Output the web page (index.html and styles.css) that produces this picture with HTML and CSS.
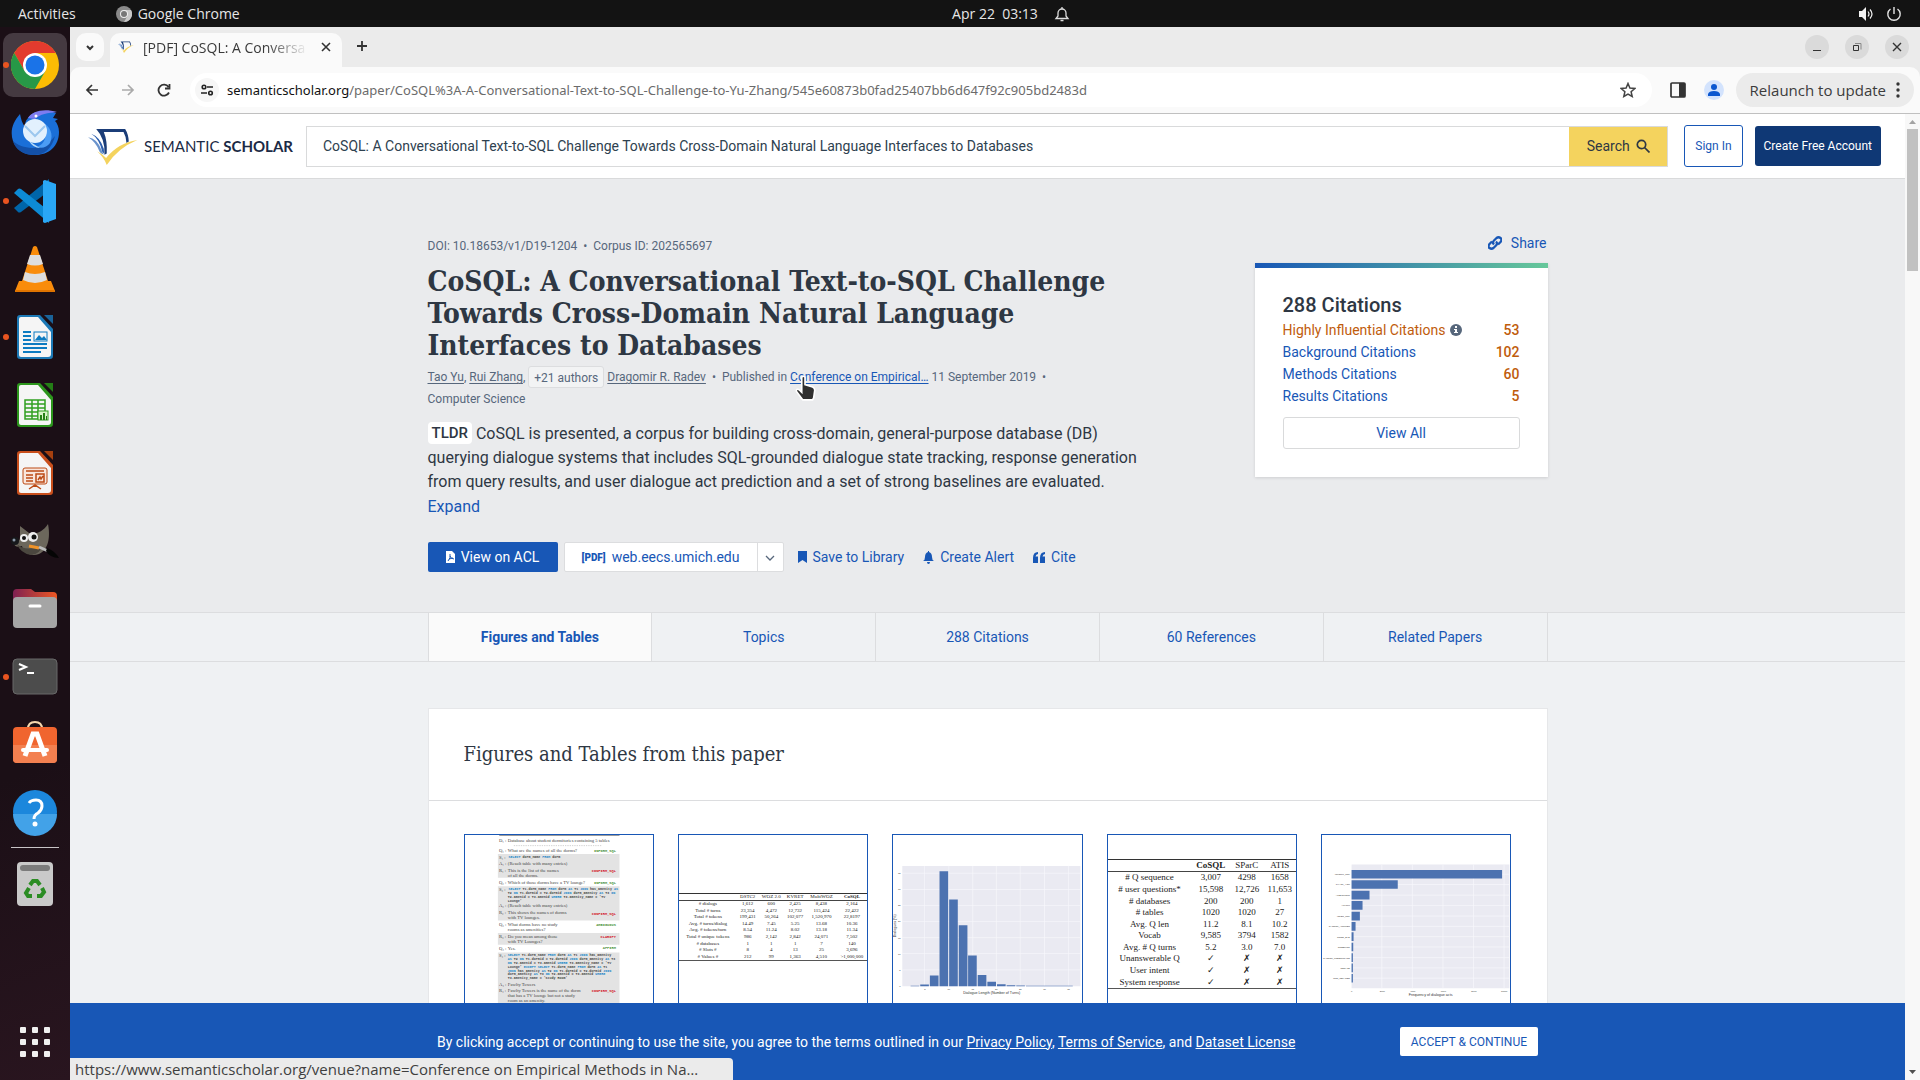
FILE: index.html
```
<!DOCTYPE html>
<html lang="en">
<head>
    <meta charset="UTF-8">
    <meta name="viewport" content="width=device-width, initial-scale=1.0">
    <title>[PDF] CoSQL: A Conversational Text-to-SQL Challenge</title>
    <link rel="stylesheet" href="styles.css">
</head>
<body>
    <div class="topbar">
        <div class="topbar-left">
            <span>Activities</span>
            <span class="topbar-app">
                <svg width="16" height="16" viewBox="0 0 16 16"><circle cx="8" cy="8" r="8" fill="#8a8a8a"/><path d="M8 4h7a8 8 0 0 1-7 12l3.500-6z" fill="#c8c8c8"/><circle cx="8" cy="8" r="4" fill="#eee"/><circle cx="8" cy="8" r="3" fill="#777"/></svg>
                Google Chrome
            </span>
        </div>
        <div class="topbar-clock">
            <span>Apr 22&nbsp; 03:13</span>
            <svg width="16" height="16" viewBox="0 0 16 16" fill="none" stroke="#ddd" stroke-width="1.300"><path d="M2 12.500h12l-2-2.500V7a4 4 0 0 0-8 0v3z"/><path d="M6.500 14.500h3M8 1v2"/></svg>
        </div>
        <div class="topbar-right">
            <svg width="16" height="16" viewBox="0 0 16 16"><path d="M1 5h3l4-4v14l-4-4H1z" fill="#f2f2f2"/><path d="M10 5.500q2 2.500 0 5M12 3.500q4 4.500 0 9" fill="none" stroke="#f2f2f2" stroke-width="1.200"/></svg>
            <svg width="16" height="16" viewBox="0 0 16 16" fill="none" stroke="#e6e6e6" stroke-width="1.400"><path d="M4.500 3A6.200 6.200 0 1 0 11.500 3M8 1v7"/></svg>
        </div>
    </div>

    <div class="desktop">
        <nav class="dock" aria-label="Dock">
            <a class="dock-item active running" href="#" aria-label="Chrome">
                <svg viewBox="0 0 48 48"><circle cx="24" cy="24" r="24" fill="#fbbc04"/><path d="M3.200 12A24 24 0 0 1 44.800 12H24L13.600 30z" fill="#e33b2e"/><path d="M3.200 12A24 24 0 0 0 24 48L34.400 30 24 36 13.600 30z" fill="#279847"/><circle cx="24" cy="24" r="12" fill="#fff"/><circle cx="24" cy="24" r="9.500" fill="#1a73e8"/></svg>
            </a>
            <a class="dock-item" href="#" aria-label="Thunderbird">
                <svg viewBox="0 0 48 48"><path d="M9 5C1 14-1 23 2 32c4 10 12 14 22 14 14 0 24-9 24-23 0-5-2-9-4-11l3-2-5-1 3-5c-10-4-24-2-28 5-3 3-3 6-3 9-3-4-4-8-5-13z" fill="#1a6fd8"/><path d="M17 9C21 2 33-1 46 3c-9 1-17 2-22 7z" fill="#7d7cf0"/><path d="M2 32c9 8 29 12 42-5-3 12-10 19-21 19S4 40 2 32z" fill="#1350a8"/><path d="M31 13c8 4 12 12 8 21-3 4-8 6-13 4 8-3 12-12 5-25z" fill="#4b9cf5"/><circle cx="24" cy="22" r="12" fill="#e2f0fd"/><path d="M14 17l10 10 10-10" fill="none" stroke="#9cc7ee" stroke-width="2"/><path d="M18 32q6 4 11 7-7 0-11-7z" fill="#b3d9fa"/><circle cx="25" cy="7" r="1.500" fill="#fff"/></svg>
            </a>
            <a class="dock-item running" href="#" aria-label="VS Code">
                <svg viewBox="0 0 48 48"><path d="M3 31l4 4q1 1 3 0L38 14V2z" fill="#0065a9"/><path d="M3 16l4-4q1-1 3 0L38 34v12z" fill="#0d8bd6"/><path d="M34 3l11 4v35l-11 4q-1 0-2-1V4q1-1 2-1z" fill="#2aa7f5"/></svg>
            </a>
            <a class="dock-item" href="#" aria-label="VLC">
                <svg viewBox="0 0 48 48"><path d="M8 36h32l4 10H4z" fill="#f98c0b"/><path d="M4 45h40v2H4z" fill="#e07400"/><path d="M22 2q2-2 4 0l11 34q-13 7-26 0z" fill="#f98c0b"/><path d="M19 10h10l3 9q-8 3-16 0zM14 27q10 4 20 0l2 8q-12 6-24 0z" fill="#dedede"/></svg>
            </a>
            <a class="dock-item running" href="#" aria-label="Writer">
                <svg viewBox="0 0 48 48"><path d="M9 2h20l13 14v27q0 3-3 3H9q-3 0-3-3V5q0-3 3-3z" fill="#1c79b6"/><path d="M10 4h17l13 15v22q0 3-3 3H10q-2 0-2-2V6q0-2 2-2z" fill="#f5f5f5"/><path d="M33 2h9v9z" fill="#1a6399"/><path d="M12 19h8M12 23h8M12 27h8M12 31h24M12 35h24M12 39h18" stroke="#0d7bc1" stroke-width="2"/><rect x="23" y="19" width="13" height="9" fill="none" stroke="#0d7bc1"/><path d="M24 27l4-5 3 3 2-2 3 4z" fill="#0d7bc1"/></svg>
            </a>
            <a class="dock-item" href="#" aria-label="Calc">
                <svg viewBox="0 0 48 48"><path d="M9 2h20l13 14v27q0 3-3 3H9q-3 0-3-3V5q0-3 3-3z" fill="#2c961c"/><path d="M10 4h17l13 15v22q0 3-3 3H10q-2 0-2-2V6q0-2 2-2z" fill="#f5f5f5"/><path d="M33 2h9v9z" fill="#247e16"/><path d="M14 19h20v19H14zM14 23h20M14 27h20M14 31h20M14 35h20M21 19v19M27 19v19" fill="none" stroke="#31a020" stroke-width="1.500"/><rect x="27" y="30" width="10" height="9" fill="#d7f3c8" stroke="#31a020"/><path d="M29 39v-5h2v5zM32 39v-7h2v7zM35 39v-4h1v4z" fill="#247e16"/></svg>
            </a>
            <a class="dock-item" href="#" aria-label="Impress">
                <svg viewBox="0 0 48 48"><path d="M9 2h20l13 14v27q0 3-3 3H9q-3 0-3-3V5q0-3 3-3z" fill="#c94f1c"/><path d="M10 4h17l13 15v22q0 3-3 3H10q-2 0-2-2V6q0-2 2-2z" fill="#f5f5f5"/><path d="M33 2h9v9z" fill="#a6400f"/><rect x="12" y="19" width="24" height="16" rx="2" fill="#f9e6dc" stroke="#bc4a15"/><path d="M15 22h18M15 26h7M15 29h7M15 32h7" stroke="#bc4a15" stroke-width="1.500"/><path d="M25 25h8v8h-8zM27 31l2-3 1 2 2-3M24 36v2M18 40l6-4 6 4" fill="none" stroke="#bc4a15" stroke-width="1.500"/></svg>
            </a>
            <a class="dock-item" href="#" aria-label="GIMP">
                <svg viewBox="0 0 48 48"><path d="M9 9l9 7c6 2 14-1 19-9 2 10 2 25-9 30-9 3-16-2-17-8-5 2-8 0-8-3 3-2 6-1 6-6z" fill="#6c675c"/><path d="M6 27q8 8 24 2 0 8-10 9-11-2-14-11z" fill="#4b473f"/><circle cx="4" cy="24" r="4" fill="#17181b"/><circle cx="3" cy="23" r="1.500" fill="#8b98a8"/><circle cx="13" cy="21" r="4" fill="#eee"/><circle cx="13" cy="21" r="2" fill="#111"/><circle cx="22" cy="20" r="5" fill="#eee"/><circle cx="23" cy="20" r="2.500" fill="#111"/><path d="M18 29l10 2" stroke="#ef9329" stroke-width="3"/><path d="M28 30l9 4" stroke="#bbb" stroke-width="3"/><path d="M36 31q8 3 12 10-9 0-13-7z" fill="#050505"/></svg>
            </a>
            <a class="dock-item" href="#" aria-label="Files">
                <svg viewBox="0 0 48 48"><defs><linearGradient id="folder"><stop offset="0" stop-color="#7e2152"/><stop offset="1" stop-color="#ee5824"/></linearGradient></defs><path d="M2 8q0-4 4-4h14l4 3h18q4 0 4 4v8H2z" fill="url(#folder)"/><rect x="2" y="12" width="44" height="31" rx="4" fill="#a5a5a5"/><path d="M19 21h10" stroke="#fff" stroke-width="3" stroke-linecap="round"/></svg>
            </a>
            <a class="dock-item running" href="#" aria-label="Terminal">
                <svg viewBox="0 0 48 48"><rect x="2" y="6" width="44" height="35" rx="4" fill="#4c4c4c" stroke="#686868"/><path d="M8 11l7 3-7 3M16 20h7" fill="none" stroke="#fff" stroke-width="2"/></svg>
            </a>
            <a class="dock-item" href="#" aria-label="Software">
                <svg viewBox="0 0 48 48"><path d="M17 8q0-7 7-7t7 7" fill="none" stroke="#f4d7ae" stroke-width="2"/><rect x="2" y="6" width="44" height="36" rx="4" fill="#f0652f"/><path d="M2 24h44v14q0 4-4 4H6q-4 0-4-4z" fill="#f38050"/><path d="M14 35l8-22h4l8 22" fill="none" stroke="#fff" stroke-width="5"/><path d="M12 29h24" stroke="#fff" stroke-width="4" stroke-linecap="round"/></svg>
            </a>
            <a class="dock-item" href="#" aria-label="Help">
                <svg viewBox="0 0 48 48"><circle cx="24" cy="23" r="22" fill="#1c87dc"/><path d="M2 25h44a22 22 0 0 1-44 0z" fill="#42a2e8"/><path d="M18 14q2-3 7-3 6 0 6 6 0 4-4 7-4 2-4 6" fill="none" stroke="#fff" stroke-width="3"/><circle cx="24" cy="35" r="2.500" fill="#fff"/></svg>
            </a>
            <hr class="dock-line">
            <a class="dock-item" href="#" aria-label="Trash">
                <svg viewBox="0 0 48 48"><rect x="6" y="2" width="36" height="44" rx="4" fill="#c9c9c9"/><rect x="9" y="5" width="30" height="6" rx="3" fill="#7b7b7b"/><g fill="none" stroke="#2b8c24" stroke-width="4"><path d="M19 25l3-4h4l3 4M31 28l2 4-3 4h-4M21 36h-4l-2-3 3-5"/></g></svg>
            </a>
            <a class="dock-item dock-apps" href="#" aria-label="Show applications">
                <svg viewBox="0 0 48 48" fill="#f0f0f0"><rect x="9" y="9" width="6" height="6" rx="1"/><rect x="21" y="9" width="6" height="6" rx="1"/><rect x="33" y="9" width="6" height="6" rx="1"/><rect x="9" y="21" width="6" height="6" rx="1"/><rect x="21" y="21" width="6" height="6" rx="1"/><rect x="33" y="21" width="6" height="6" rx="1"/><rect x="9" y="33" width="6" height="6" rx="1"/><rect x="21" y="33" width="6" height="6" rx="1"/><rect x="33" y="33" width="6" height="6" rx="1"/></svg>
            </a>
        </nav>

        <div class="browser">
            <div class="tabstrip">
                <button class="tab-search" aria-label="Search tabs"><svg width="10" height="10" viewBox="0 0 10 10" fill="none" stroke="#333" stroke-width="2"><path d="M2 3l3 3 3-3"/></svg></button>
                <div class="tab">
                    <svg class="favicon" width="16" height="12" viewBox="54 318 152 112"><use href="#s2-mark"/></svg>
                    <span class="tab-title">[PDF] CoSQL: A Conversa</span>
                    <button class="tab-close" aria-label="Close tab"><svg width="10" height="10" viewBox="0 0 10 10" stroke="#333" stroke-width="1.600"><path d="M1 1l8 8M9 1L1 9"/></svg></button>
                </div>
                <button class="tab-new" aria-label="New tab"><svg width="12" height="12" viewBox="0 0 12 12" stroke="#333" stroke-width="1.800"><path d="M6 1v10M1 6h10"/></svg></button>
                <div class="window-buttons">
                    <button aria-label="Minimize"><svg width="10" height="10" viewBox="0 0 10 10" stroke="#333"><path d="M1 8.500h8"/></svg></button>
                    <button aria-label="Restore"><svg width="10" height="10" viewBox="0 0 10 10" fill="none" stroke="#333"><path d="M1.500 3.500h5v5h-5z"/><path d="M3 1.500h6v6" stroke="#888"/></svg></button>
                    <button aria-label="Close"><svg width="10" height="10" viewBox="0 0 10 10" stroke="#333" stroke-width="1.400"><path d="M1 1l8 8M9 1L1 9"/></svg></button>
                </div>
            </div>

            <div class="toolbar">
                <button class="tool" aria-label="Back"><svg width="14" height="14" viewBox="0 0 14 14" fill="none" stroke="#333" stroke-width="1.700"><path d="M13 7H2M7 2L2 7l5 5"/></svg></button>
                <button class="tool" aria-label="Forward"><svg width="14" height="14" viewBox="0 0 14 14" fill="none" stroke="#aaa" stroke-width="1.700"><path d="M1 7h11M7 2l5 5-5 5"/></svg></button>
                <button class="tool" aria-label="Reload"><svg width="14" height="14" viewBox="0 0 14 14" fill="none" stroke="#333" stroke-width="1.800"><path d="M12 9.500A5.500 5.500 0 1 1 11.500 4M12.500 1v4.500H8"/></svg></button>
                <div class="omnibox">
                    <button class="site-info" aria-label="Site information"><svg width="14" height="14" viewBox="0 0 14 14" fill="none" stroke="#222" stroke-width="1.600"><circle cx="4" cy="4" r="1.800"/><path d="M7 4h6M1 10h6"/><circle cx="10.500" cy="10" r="1.800"/></svg></button>
                    <span class="url"><b>semanticscholar.org</b>/paper/CoSQL%3A-A-Conversational-Text-to-SQL-Challenge-to-Yu-Zhang/545e60873b0fad25407bb6d647f92c905bd2483d</span>
                    <button class="star" aria-label="Bookmark"><svg width="16" height="16" viewBox="0 0 16 16" fill="none" stroke="#444" stroke-width="1.500"><path d="M8 1.500l1.900 4.600 4.900.4-3.700 3.200 1.100 4.800L8 12l-4.200 2.500 1.100-4.800L1.200 6.500l4.900-.4z"/></svg></button>
                </div>
                <button class="tool side-panel" aria-label="Side panel"><svg width="16" height="16" viewBox="0 0 16 16"><rect x="1" y="1" width="14" height="14" rx="1" fill="none" stroke="#333" stroke-width="1.700"/><path d="M9 1h6v14H9z" fill="#333"/></svg></button>
                <button class="avatar" aria-label="Profile"><svg width="20" height="20" viewBox="0 0 20 20" fill="#0b57d0"><circle cx="10" cy="7" r="3"/><path d="M4 16v-2q1-3 6-3t6 3v2z"/></svg></button>
                <button class="relaunch">Relaunch to update <svg width="4" height="16" viewBox="0 0 4 16" fill="#333"><circle cx="2" cy="2" r="1.700"/><circle cx="2" cy="8" r="1.700"/><circle cx="2" cy="14" r="1.700"/></svg></button>
            </div>

            <div class="viewport">
                <div class="page">
                    <header class="site-header">
                        <a class="logo" href="#">
                            <svg width="50" height="37" viewBox="54 318 152 112">
                                <g id="s2-mark">
                                    <path d="M54 346q28 2 43 43l5 9q-11-3-13-9-12-30-35-43z" fill="#6a93cc"/>
                                    <path d="M64 335q27 10 38 46l1 15-6-7q-8-38-33-54z" fill="#2d5fae"/>
                                    <path d="M79 321h88q10 16 11 38l-7 4q-1-19-9-33h-60q11 26 9 65l-7 4q3-48-25-78z" fill="#1b3d78"/>
                                    <path d="M82 389q17 7 27 20 36-46 95-55-59 24-93 76-10-26-29-41z" fill="#f4d35e"/>
                                </g>
                            </svg>
                            <span>SEMANTIC <b>SCHOLAR</b></span>
                        </a>
                        <form class="search">
                            <input type="text" aria-label="Search papers" value="CoSQL: A Conversational Text-to-SQL Challenge Towards Cross-Domain Natural Language Interfaces to Databases">
                            <button type="button">Search <svg width="14" height="14" viewBox="0 0 14 14" fill="none" stroke="#2e3743" stroke-width="1.700"><circle cx="5.500" cy="5.500" r="4.200"/><path d="M8.500 8.500l5 5"/></svg></button>
                        </form>
                        <button class="sign-in">Sign In</button>
                        <button class="create-account">Create Free Account</button>
                    </header>

                    <section class="hero">
                        <div class="container hero-inner">
                            <div class="paper">
                                <div class="ids">DOI: 10.18653/v1/D19-1204 &nbsp;•&nbsp; Corpus ID: 202565697</div>
                                <h1>CoSQL: A Conversational Text-to-SQL Challenge<br>Towards Cross-Domain Natural Language<br>Interfaces to Databases</h1>
                                <div class="meta">
                                    <a href="#">Tao Yu</a>, <a href="#">Rui Zhang</a>, <button class="more-authors">+21 authors</button> <a href="#">Dragomir R. Radev</a>
                                    &nbsp;•&nbsp; Published in <a class="venue" href="#">Conference on Empirical…<svg class="pointer" width="22" height="26" viewBox="0 0 20 24"><path d="M7 2q2-2 3 0v7l7 2q2 1 2 3l-1 7-1 2H8l-6-8q0-3 3-1l2 2z" fill="#2f2f2f" stroke="#fff" stroke-width="1.500"/></svg></a>
                                    11 September 2019 &nbsp;•<br>Computer Science
                                </div>
                                <p class="abstract"><span class="tldr">TLDR</span> CoSQL is presented, a corpus for building cross-domain, general-purpose database (DB) querying dialogue systems that includes SQL-grounded dialogue state tracking, response generation from query results, and user dialogue act prediction and a set of strong baselines are evaluated.</p>
                                <button class="expand">Expand</button>
                                <div class="actions">
                                    <a class="view-acl" href="#"><svg width="9" height="12" viewBox="0 0 9 12"><path d="M0 0h6l3 3v9H0z" fill="#fff"/><path d="M4 3q1 4-2 7M4 5q1 3 4 3M3 8l4-1" fill="none" stroke="#1857b6"/></svg>View on ACL</a>
                                    <div class="pdf-group">
                                        <a href="#"><b>[PDF]</b>web.eecs.umich.edu</a>
                                        <button aria-label="More sources"><svg width="10" height="8" viewBox="0 0 10 8" fill="none" stroke="#57677c" stroke-width="1.300"><path d="M1 2l4 4 4-4"/></svg></button>
                                    </div>
                                    <button class="action"><svg width="9" height="12" viewBox="0 0 9 12"><path d="M0 0h9v12L4.500 9 0 12z"/></svg>Save to Library</button>
                                    <button class="action"><svg width="11" height="13" viewBox="0 0 11 13"><path d="M5 0h1v1q3 1 3 5 0 3 2 4H0q2-1 2-4 0-4 3-5zM4 11h3q0 2-1.500 2T4 11z"/></svg>Create Alert</button>
                                    <button class="action"><svg width="12" height="11" viewBox="0 0 12 11"><path d="M5 0v2Q3 2 2.500 4.500H5V11H0V6q0-6 5-6zM12 0v2q-2 0-2.500 2.500H12V11H7V6q0-6 5-6z"/></svg>Cite</button>
                                </div>
                            </div>

                            <aside class="side">
                                <button class="share"><svg width="14" height="14" viewBox="0 0 14 14" fill="none" stroke="#1857b6" stroke-width="2.300"><path d="M6 8.500q-2-2 0-4L8.500 2q2-1.500 4 0t0 4L10 8.500"/><path d="M8 5.500q2 2 0 4L5.500 12q-2 1.500-4 0t0-4L4 5.500"/></svg>Share</button>
                                <div class="citations">
                                    <h2>288 Citations</h2>
                                    <table>
                                        <tr class="influential"><th><a href="#">Highly Influential Citations</a><svg width="12" height="12" viewBox="0 0 12 12"><circle cx="6" cy="6" r="6" fill="#57677c"/><path d="M5 2h2v2H5zM4 5h3v3h1v1H4V8h1V6H4z" fill="#fff"/></svg></th><td>53</td></tr>
                                        <tr><th><a href="#">Background Citations</a></th><td>102</td></tr>
                                        <tr><th><a href="#">Methods Citations</a></th><td>60</td></tr>
                                        <tr><th><a href="#">Results Citations</a></th><td>5</td></tr>
                                    </table>
                                    <button>View All</button>
                                </div>
                            </aside>
                        </div>
                    </section>

                    <nav class="page-nav">
                        <div class="container page-nav-inner">
                            <a class="current" href="#">Figures and Tables</a>
                            <a href="#">Topics</a>
                            <a href="#">288 Citations</a>
                            <a href="#">60 References</a>
                            <a href="#">Related Papers</a>
                        </div>
                    </nav>

                    <section class="container figures">
                        <h2>Figures and Tables from this paper</h2>
                        <div class="figure-grid">
                            <a class="figure" href="#">
                                <svg viewBox="75 75 567 560">
                                    <path d="M178 76h362" stroke="#888" stroke-width="3"/>
                                    <g fill="#e3e3e3"><path d="M174 132h366v72H174zM174 229h366v103H174zM174 370h366v35H174zM174 429h366v210H174z"/></g>
                                    <path d="M222 107h266" stroke="#777" stroke-dasharray="4 3"/>
                                    <g class="fig-serif">
                                        <text x="177" y="95">D₁ :</text><text x="204" y="95">Database about student dormitories containing 5 tables</text>
                                        <text x="177" y="125">Q₁ :</text><text x="204" y="125">What are the names of all the dorms?</text>
                                        <text x="177" y="146">S₁ :</text>
                                        <text x="177" y="166">A₁ :</text><text x="204" y="166">(Result table with many entries)</text>
                                        <text x="177" y="186">R₁ :</text><text x="204" y="186">This is the list of the names</text><text x="204" y="201">of all the dorms.</text>
                                        <text x="177" y="222">Q₂ :</text><text x="204" y="222">Which of those dorms have a TV lounge?</text>
                                        <text x="177" y="243">S₂ :</text>
                                        <text x="177" y="293">A₂ :</text><text x="204" y="293">(Result table with many entries)</text>
                                        <text x="177" y="312">R₂ :</text><text x="204" y="312">This shows the names of dorms</text><text x="204" y="327">with TV lounges.</text>
                                        <text x="177" y="349">Q₃ :</text><text x="204" y="349">What dorms have no study</text><text x="204" y="364">rooms as amenities?</text>
                                        <text x="177" y="385">R₃ :</text><text x="204" y="385">Do you mean among those</text><text x="204" y="399">with TV Lounges?</text>
                                        <text x="177" y="420">Q₄ :</text><text x="204" y="420">Yes.</text>
                                        <text x="177" y="441">S₄ :</text>
                                        <text x="177" y="529">A₄ :</text><text x="204" y="529">Fawlty Towers</text>
                                        <text x="177" y="548">R₄ :</text><text x="204" y="548">Fawlty Towers is the name of the dorm</text><text x="204" y="563">that has a TV lounge but not a study</text><text x="204" y="578">room as an amenity.</text>
                                    </g>
                                    <g class="fig-mono">
                                        <text x="206" y="145"><tspan>SELECT</tspan> dorm_name <tspan>FROM</tspan> dorm</text>
                                        <text x="206" y="242"><tspan>SELECT</tspan> T1.dorm_name <tspan>FROM</tspan> dorm <tspan>AS</tspan> T1 <tspan>JOIN</tspan> has_amenity <tspan>AS</tspan></text>
                                        <text x="204" y="254">T2 <tspan>ON</tspan> T1.dormid = T2.dormid <tspan>JOIN</tspan> dorm_amenity <tspan>AS</tspan> T3 <tspan>ON</tspan></text>
                                        <text x="204" y="265">T2.amenid = T3.amenid <tspan>WHERE</tspan> T3.amenity_name = 'TV</text>
                                        <text x="204" y="277">Lounge'</text>
                                        <text x="204" y="440"><tspan>SELECT</tspan> T1.dorm_name <tspan>FROM</tspan> dorm <tspan>AS</tspan> T1 <tspan>JOIN</tspan> has_amenity</text>
                                        <text x="204" y="452"><tspan>AS</tspan> T2 <tspan>ON</tspan> T1.dormid = T2.dormid <tspan>JOIN</tspan> dorm_amenity <tspan>AS</tspan> T3</text>
                                        <text x="204" y="463"><tspan>ON</tspan> T2.amenid = T3.amenid <tspan>WHERE</tspan> T3.amenity_name = 'TV</text>
                                        <text x="204" y="475">Lounge' <tspan>EXCEPT SELECT</tspan> T1.dorm_name <tspan>FROM</tspan> dorm <tspan>AS</tspan> T1</text>
                                        <text x="204" y="486"><tspan>JOIN</tspan> has_amenity <tspan>AS</tspan> T2 <tspan>ON</tspan> T1.dormid = T2.dormid <tspan>JOIN</tspan></text>
                                        <text x="204" y="497">dorm_amenity <tspan>AS</tspan> T3 <tspan>ON</tspan> T2.amenid = T3.amenid <tspan>WHERE</tspan></text>
                                        <text x="204" y="509">T3.amenity_name = 'Study Room'</text>
                                    </g>
                                    <g class="fig-tag fig-inform"><text x="529" y="125">INFORM_SQL</text><text x="529" y="221">INFORM_SQL</text><text x="529" y="348">AMBIGUOUS</text><text x="529" y="419">AFFIRM</text></g>
                                    <g class="fig-tag fig-confirm"><text x="529" y="186">CONFIRM_SQL</text><text x="529" y="316">CONFIRM_SQL</text><text x="529" y="384">CLARIFY</text><text x="529" y="548">CONFIRM_SQL</text></g>
                                </svg>
                            </a>
                            <a class="figure" href="#">
                                <table class="fig-table dialogs">
                                    <thead><tr><th></th><th>DSTC2</th><th>WOZ 2.0</th><th>KVRET</th><th>MultiWOZ</th><th><b>CoSQL</b></th></tr></thead>
                                    <tbody>
                                        <tr><td># dialogs</td><td>1,612</td><td>600</td><td>2,425</td><td>8,438</td><td>2,164</td></tr>
                                        <tr><td>Total # turns</td><td>23,354</td><td>4,472</td><td>12,732</td><td>115,424</td><td>22,422</td></tr>
                                        <tr><td>Total # tokens</td><td>199,431</td><td>50,264</td><td>102,077</td><td>1,520,970</td><td>22,8197</td></tr>
                                        <tr><td>Avg. # turns/dialog</td><td>14.49</td><td>7.45</td><td>5.25</td><td>13.68</td><td>10.36</td></tr>
                                        <tr><td>Avg. # tokens/turn</td><td>8.54</td><td>11.24</td><td>8.02</td><td>13.18</td><td>11.34</td></tr>
                                        <tr><td>Total # unique tokens</td><td>986</td><td>2,142</td><td>2,842</td><td>24,071</td><td>7,502</td></tr>
                                        <tr><td># databases</td><td>1</td><td>1</td><td>1</td><td>7</td><td>140</td></tr>
                                        <tr><td># Slots #</td><td>8</td><td>4</td><td>13</td><td>25</td><td>3,696</td></tr>
                                        <tr><td># Values #</td><td>212</td><td>99</td><td>1,363</td><td>4,510</td><td>&gt;1,000,000</td></tr>
                                    </tbody>
                                </table>
                            </a>
                            <a class="figure" href="#">
                                <svg class="fig-chart" viewBox="39 75 567 560">
                                    <path d="M67 168h536v362H67z" fill="#eaeaf2"/>
                                    <path d="M67 190h536M67 239h536M67 287h536M67 335h536M67 384h536M67 432h536M67 481h536M134 168v362M207 168v362M279 168v362M350 168v362M422 168v362M495 168v362M567 168v362" stroke="#f8f8fc" stroke-width="2"/>
                                    <path d="M92 529h26v1H92zM121 525h26v5h-26zM150 498h26v32h-26zM179 184h26v346h-26zM208 269h26v261h-26zM237 347h26v183h-26zM265 438h26v92h-26zM294 496h26v34h-26zM323 517h26v13h-26zM352 524h26v6h-26zM381 527h26v3h-26zM410 528h26v2h-26zM439 529h141v1H439z" fill="#4c72b0"/>
                                    <g class="fig-tick"><text x="62" y="193">35</text><text x="62" y="242">30</text><text x="62" y="290">25</text><text x="62" y="338">20</text><text x="62" y="387">15</text><text x="62" y="435">10</text><text x="62" y="484">5</text><text x="62" y="533">0</text><text x="137" y="541">5</text><text x="211" y="541">10</text><text x="283" y="541">15</text><text x="354" y="541">20</text><text x="426" y="541">25</text><text x="499" y="541">30</text><text x="571" y="541">35</text></g>
                                    <text class="fig-axis" x="336" y="553">Dialogue Length (Number of Turns)</text>
                                    <text class="fig-axis" transform="translate(49 348) rotate(-90)">Dialogues (%)</text>
                                </svg>
                            </a>
                            <a class="figure" href="#">
                                <table class="fig-table corpora">
                                    <thead><tr><th></th><th><b>CoSQL</b></th><th>SParC</th><th>ATIS</th></tr></thead>
                                    <tbody>
                                        <tr><td># Q sequence</td><td>3,007</td><td>4298</td><td>1658</td></tr>
                                        <tr><td># user questions*</td><td>15,598</td><td>12,726</td><td>11,653</td></tr>
                                        <tr><td># databases</td><td>200</td><td>200</td><td>1</td></tr>
                                        <tr><td># tables</td><td>1020</td><td>1020</td><td>27</td></tr>
                                        <tr><td>Avg. Q len</td><td>11.2</td><td>8.1</td><td>10.2</td></tr>
                                        <tr><td>Vocab</td><td>9,585</td><td>3794</td><td>1582</td></tr>
                                        <tr><td>Avg. # Q turns</td><td>5.2</td><td>3.0</td><td>7.0</td></tr>
                                        <tr><td>Unanswerable Q</td><td>✓</td><td>✗</td><td>✗</td></tr>
                                        <tr><td>User intent</td><td>✓</td><td>✗</td><td>✗</td></tr>
                                        <tr><td>System response</td><td>✓</td><td>✗</td><td>✗</td></tr>
                                    </tbody>
                                </table>
                            </a>
                            <a class="figure" href="#">
                                <svg class="fig-chart" viewBox="366 75 567 560">
                                    <path d="M455 164h475v372H455z" fill="#eaeaf2"/>
                                    <path d="M546 164v372M638 164v372M730 164v372M822 164v372M914 164v372M455 193h475M455 224h475M455 256h475M455 287h475M455 319h475M455 350h475M455 381h475M455 412h475M455 444h475M455 475h475M455 506h475" stroke="#f8f8fc" stroke-width="2"/>
                                    <path d="M455 180h453v26H455zM455 211h139v26H455zM455 243h54v26h-54zM455 274h33v26h-33zM455 306h25v26h-25zM455 337h12v26h-12zM455 368h6v26h-6zM455 399h5v26h-5zM455 431h4v26h-4zM455 462h4v26h-4zM455 493h4v26h-4z" fill="#4c72b0"/>
                                    <g class="fig-tick"><text x="450" y="196">INFORM_SQL</text><text x="450" y="227">THANK_YOU</text><text x="450" y="258">AMBIGUOUS</text><text x="450" y="290">AFFIRM</text><text x="450" y="321">INFER_SQL</text><text x="450" y="353">CANNOT_ANSWER</text><text x="450" y="384">GOOD_BYE</text><text x="450" y="415">GREETING</text><text x="450" y="447">CANNOT_UNDERSTAND</text><text x="450" y="478">NEGATE</text><text x="450" y="508">NOT_RELATED</text><text x="457" y="547">0</text><text x="555" y="547">2000</text><text x="647" y="547">4000</text><text x="739" y="547">6000</text><text x="831" y="547">8000</text><text x="924" y="547">10000</text></g>
                                    <text class="fig-axis" x="693" y="559">Frequency of dialogue acts</text>
                                </svg>
                            </a>
                        </div>
                    </section>

                    <div class="banner">
                        <div class="banner-inner">
                            <p>By clicking accept or continuing to use the site, you agree to the terms outlined in our <a href="#">Privacy Policy</a>, <a href="#">Terms of Service</a>, and <a href="#">Dataset License</a></p>
                            <button>ACCEPT &amp; CONTINUE</button>
                        </div>
                    </div>
                </div>

                <div class="scrollbar">
                    <svg width="7" height="4" viewBox="0 0 7 4"><path d="M0 4l3.500-4L7 4z" fill="#a3a3a3"/></svg>
                    <div class="scroll-thumb"></div>
                    <svg class="scroll-down" width="7" height="4" viewBox="0 0 7 4"><path d="M0 0l3.500 4L7 0z" fill="#505050"/></svg>
                </div>
                <div class="status">https://www.semanticscholar.org/venue?name=Conference on Empirical Methods in Na…</div>
            </div>
        </div>
    </div>
</body>
</html>
```
FILE: styles.css
```
* {
    box-sizing: border-box;
}

body {
    margin: 0;
    height: 100vh;
    display: flex;
    flex-direction: column;
    overflow: hidden;
    background-color: #1b0f16;
    font-family: Roboto, sans-serif;
    font-size: 14px;
    color: #2e3743;
}

button {
    font: inherit;
    color: inherit;
    background: none;
    border: none;
    padding: 0;
    cursor: pointer;
}

a {
    color: #1857b6;
    text-decoration: none;
}

h1, h2, p {
    margin: 0;
}

svg {
    flex: none;
}

/* desktop */

.topbar {
    display: grid;
    grid-template-columns: 1fr auto 1fr;
    align-items: center;
    height: 27px;
    flex: none;
    padding: 0 18px;
    background-color: #131313;
    color: #e6e6e6;
    font-family: "Open Sans", sans-serif;
    font-size: 14px;
}

.topbar-left, .topbar-app, .topbar-clock, .topbar-right {
    display: flex;
    align-items: center;
}

.topbar-left {
    gap: 40px;
}

.topbar-app {
    gap: 6px;
}

.topbar-clock {
    gap: 16px;
    padding-left: 102px;
}

.topbar-right {
    gap: 12px;
    justify-content: flex-end;
}

.desktop {
    flex: 1;
    min-height: 0;
    display: flex;
}

.dock {
    width: 70px;
    flex: none;
    display: flex;
    flex-direction: column;
    align-items: center;
    gap: 4px;
    padding: 6px 0;
    background: linear-gradient(160deg, #1b0f16 70%, #29151f);
}

.dock-item {
    position: relative;
    width: 64px;
    height: 64px;
    flex: none;
    display: flex;
    align-items: center;
    justify-content: center;
    border-radius: 10px;
}

.dock-item svg {
    width: 48px;
    height: 48px;
}

.dock-item.active {
    background-color: #453a41;
}

.dock-item.running::before {
    content: "";
    position: absolute;
    left: 0;
    width: 6px;
    height: 6px;
    border-radius: 50%;
    background-color: #e95420;
}

.dock-line {
    width: 48px;
    margin: -2px 0 0;
    border: none;
    border-top: 1px solid #c8c4c6;
}

.dock-apps {
    margin-top: auto;
}

/* browser window */

.browser {
    flex: 1;
    min-width: 0;
    display: flex;
    flex-direction: column;
    background-color: #ebebeb;
    font-family: "Open Sans", sans-serif;
}

.tabstrip {
    height: 40px;
    flex: none;
    display: flex;
    align-items: center;
    padding: 0 11px 0 6px;
}

.tab-search {
    width: 28px;
    height: 28px;
    border-radius: 10px;
    background-color: #fafafa;
}

.tab {
    align-self: flex-end;
    width: 232px;
    height: 34px;
    margin-left: 6px;
    padding: 0 4px 6px 8px;
    display: flex;
    align-items: center;
    border-radius: 10px 10px 0 0;
    background-color: #fafafa;
}

.tab-title {
    flex: 1;
    min-width: 0;
    margin-left: 9px;
    overflow: hidden;
    white-space: nowrap;
    color: #3a3a3a;
    -webkit-mask-image: linear-gradient(to right, #000 75%, transparent);
    mask-image: linear-gradient(to right, #000 75%, transparent);
}

.tab-close {
    width: 24px;
    margin-left: 6px;
    line-height: 1;
}

.tab-new {
    width: 28px;
    margin-left: 6px;
    line-height: 1;
}

.window-buttons {
    display: flex;
    gap: 16px;
    margin-left: auto;
}

.window-buttons button {
    width: 24px;
    height: 24px;
    display: flex;
    align-items: center;
    justify-content: center;
    border-radius: 50%;
    background-color: #dadada;
}

.toolbar {
    height: 47px;
    flex: none;
    display: flex;
    align-items: center;
    padding: 0 6px 0 8px;
    gap: 8px;
    background-color: #fafafa;
    border-bottom: 1px solid #c0c0c0;
    border-radius: 10px 10px 0 0;
}

.tool {
    width: 28px;
    height: 28px;
    display: flex;
    align-items: center;
    justify-content: center;
}

.omnibox {
    flex: 1;
    min-width: 0;
    height: 34px;
    display: flex;
    align-items: center;
    margin-left: 4px;
    padding: 0 16px 0 5px;
    border-radius: 17px;
    background-color: #fff;
}

.site-info {
    width: 24px;
    height: 24px;
    display: flex;
    align-items: center;
    justify-content: center;
    border-radius: 50%;
    background-color: #f6f6f6;
}

.url {
    flex: 1;
    margin-left: 8px;
    font-family: "Noto Sans", sans-serif;
    font-size: 13px;
    white-space: nowrap;
    color: #6b6b6b;
}

.url b {
    font-weight: 400;
    color: #111;
}

.star {
    height: 16px;
}

.side-panel {
    margin-left: 4px;
}

.avatar {
    width: 20px;
    height: 20px;
    margin: 0 4px;
    border-radius: 50%;
    background-color: #d3e3fd;
}

.relaunch {
    height: 34px;
    display: flex;
    align-items: center;
    gap: 10px;
    padding: 0 14px;
    border-radius: 17px;
    background-color: #ebebeb;
    font-size: 15px;
    color: #3c3c3c;
    white-space: nowrap;
}

.viewport {
    position: relative;
    flex: 1;
    min-height: 0;
    display: flex;
}

.scrollbar {
    width: 15px;
    flex: none;
    display: flex;
    flex-direction: column;
    align-items: center;
    padding: 6px 0;
    background-color: #f8f8f8;
}

.scroll-thumb {
    width: 11px;
    height: 142px;
    margin-top: 5px;
    background-color: #c1c1c1;
}

.scroll-down {
    margin-top: auto;
}

.status {
    position: absolute;
    left: 0;
    bottom: 0;
    height: 22px;
    line-height: 22px;
    padding: 0 35px 0 5px;
    border-radius: 0 4px 0 0;
    background-color: #ebebeb;
    font-size: 15px;
    color: #3f3f3f;
}

/* page */

.page {
    flex: 1;
    min-width: 0;
    display: flex;
    flex-direction: column;
    background-color: #eff1f3;
    font-family: Roboto, sans-serif;
}

.site-header {
    height: 65px;
    flex: none;
    display: flex;
    align-items: center;
    padding: 0 24px 0 18px;
    background-color: #fff;
    border-bottom: 1px solid #d9dadb;
}

.logo {
    display: flex;
    align-items: center;
    gap: 6px;
    width: 218px;
    font-family: Lato, sans-serif;
    font-size: 15px;
    color: #1b2a45;
    white-space: nowrap;
}

.logo b {
    font-weight: 700;
}

.search {
    flex: 1;
    display: flex;
    height: 41px;
    border: 1px solid #d9dadb;
}

.search input {
    flex: 1;
    min-width: 0;
    border: none;
    outline: none;
    padding: 0 16px;
    font: 14px Roboto, sans-serif;
    color: #2e414f;
}

.search button {
    width: 98px;
    display: flex;
    align-items: center;
    justify-content: center;
    gap: 6px;
    background-color: #f4d35e;
}

.sign-in {
    height: 42px;
    margin-left: 16px;
    padding: 0 10px;
    border: 1px solid #1857b6;
    border-radius: 3px;
    font-size: 12px;
    color: #1857b6;
}

.create-account {
    height: 40px;
    margin-left: 12px;
    padding: 0 9px;
    border-radius: 3px;
    background-color: #0f3875;
    font-size: 12px;
    color: #fff;
}

.container {
    width: 100%;
    max-width: 1120px;
    margin: 0 auto;
}

.hero {
    flex: none;
    padding: 54px 0 40px;
    background-color: #eaebed;
}

.hero-inner {
    display: flex;
    justify-content: space-between;
}

.paper {
    width: 720px;
    padding-top: 4px;
}

.ids, .meta {
    font-size: 12px;
    color: #57677c;
}

.ids {
    line-height: 18px;
}

h1 {
    margin-top: 11px;
    font-family: "DejaVu Serif Condensed", "DejaVu Serif", serif;
    font-size: 28px;
    line-height: 32px;
    white-space: nowrap;
}

.meta {
    margin-top: 4px;
    line-height: 22px;
    white-space: nowrap;
}

.meta a {
    color: #57677c;
    text-decoration: underline;
    text-underline-offset: 2px;
}

.meta .venue {
    position: relative;
    color: #1857b6;
}

.pointer {
    position: absolute;
    left: 4px;
    top: 5px;
}

.more-authors {
    height: 22px;
    padding: 0 5px;
    border: 1px solid #dcdddf;
    border-radius: 3px;
    background-color: #f2f3f4;
    vertical-align: top;
}

.abstract {
    margin-top: 12px;
    font-size: 16px;
    line-height: 24px;
}

.tldr {
    display: inline-block;
    padding: 0 4px;
    border-radius: 4px;
    background-color: #fff;
    font-weight: 500;
    font-size: 15px;
    line-height: 22px;
    vertical-align: top;
}

.expand {
    display: block;
    margin-top: 1px;
    font-size: 16px;
    line-height: 24px;
    color: #1857b6;
}

.actions {
    display: flex;
    height: 30px;
    margin-top: 23px;
}

.view-acl {
    width: 130px;
    display: flex;
    align-items: center;
    justify-content: center;
    gap: 6px;
    border-radius: 2px;
    background-color: #1857b6;
    color: #fff;
}

.pdf-group {
    display: flex;
    margin: 0 14px 0 6px;
    border: 1px solid #dcdddf;
    border-radius: 2px;
    background-color: #fff;
}

.pdf-group a {
    width: 192px;
    display: flex;
    align-items: center;
    justify-content: center;
    gap: 6px;
}

.pdf-group b {
    font-size: 10px;
    font-weight: 900;
}

.pdf-group button {
    width: 26px;
    border-left: 1px solid #dcdddf;
}

.action {
    display: flex;
    align-items: center;
    gap: 6px;
    margin-right: 19px;
    color: #1857b6;
    fill: #1857b6;
}

.side {
    width: 293px;
}

.share {
    display: flex;
    align-items: center;
    gap: 9px;
    margin: 0 1px 10px auto;
    line-height: 20px;
    color: #1857b6;
}

.citations {
    padding: 25px 28px 28px;
    border-top: 5px solid;
    border-image: linear-gradient(to right, #1857b6, #67c89a) 1;
    background-color: #fff;
    box-shadow: 0 1px 3px rgba(0, 0, 0, 0.12);
}

.citations h2 {
    font-size: 20px;
    font-weight: 500;
    line-height: 24px;
}

.citations table {
    width: 100%;
    margin: 2px 0 10px;
    border-collapse: collapse;
    line-height: 22px;
}

.citations th {
    padding: 0;
    display: flex;
    align-items: center;
    gap: 5px;
    font-weight: 400;
}

.citations td {
    padding: 0;
    text-align: right;
    font-weight: 500;
    color: #bf5c0c;
}

.influential a {
    color: #bf5c0c;
}

.citations button {
    width: 100%;
    height: 32px;
    border: 1px solid #d9dadb;
    border-radius: 3px;
    color: #1857b6;
}

.page-nav {
    flex: none;
    border-top: 1px solid #dcdddf;
    border-bottom: 1px solid #dcdddf;
}

.page-nav-inner {
    display: grid;
    grid-template-columns: repeat(5, 1fr);
    border-left: 1px solid #dcdddf;
}

.page-nav a {
    height: 48px;
    line-height: 48px;
    text-align: center;
    border-right: 1px solid #dcdddf;
}

.page-nav .current {
    background-color: #fafafa;
    font-weight: 700;
}

.figures {
    flex: 1;
    min-height: 0;
    overflow: hidden;
    margin-top: 46px;
    background-color: #fff;
    border: 1px solid #e6e7e9;
    border-bottom: none;
}

.figures h2 {
    padding: 0 35px;
    font-family: "DejaVu Serif Condensed", "DejaVu Serif", serif;
    font-size: 20px;
    font-weight: 400;
    line-height: 91px;
    border-bottom: 1px solid #dcdddf;
}

.figure-grid {
    display: grid;
    grid-template-columns: repeat(5, 1fr);
    gap: 24px;
    padding: 33px 35px;
}

.figure {
    height: 190px;
    overflow: hidden;
    border: 1px solid #1857b6;
    color: #222;
}

.figure svg {
    display: block;
    width: 100%;
}

.fig-serif {
    font: 14px "Liberation Serif", serif;
    fill: #444;
}

.fig-mono {
    font: bold 10px "Liberation Mono", monospace;
    fill: #444;
}

.fig-mono tspan {
    fill: #2587c8;
}

.fig-tag {
    font: bold 11px "Liberation Mono", monospace;
    text-anchor: end;
}

.fig-inform {
    fill: #4f9440;
}

.fig-confirm {
    fill: #d3212c;
}

.fig-tick {
    font: 7px "Liberation Sans", sans-serif;
    text-anchor: end;
    fill: #333;
}

.fig-axis {
    font: 11px "Liberation Sans", sans-serif;
    text-anchor: middle;
    fill: #333;
}

.fig-table {
    width: 100%;
    border-collapse: collapse;
    font-family: "Liberation Serif", "DejaVu Sans", serif;
    text-align: center;
    border-top: 1px solid #333;
    border-bottom: 1px solid #555;
}

.fig-table th, .fig-table td {
    padding: 0;
    font-weight: 400;
}

.fig-table thead {
    border-bottom: 1px solid #444;
}

.dialogs {
    height: 68px;
    margin-top: 58px;
    font-size: 5px;
    line-height: 6px;
}

.corpora {
    height: 130px;
    margin-top: 24px;
    font-size: 9px;
    line-height: 11px;
}

.banner {
    flex: none;
    height: 77px;
    display: flex;
    justify-content: center;
    background-color: #1857b6;
    color: #fff;
}

.banner-inner {
    width: 100%;
    max-width: 1101px;
    display: flex;
    align-items: center;
    justify-content: space-between;
}

.banner a {
    color: #fff;
    text-decoration: underline;
}

.banner button {
    height: 29px;
    padding: 0 11px;
    border-radius: 2px;
    background-color: #fff;
    font-size: 12px;
    color: #1857b6;
}
```
